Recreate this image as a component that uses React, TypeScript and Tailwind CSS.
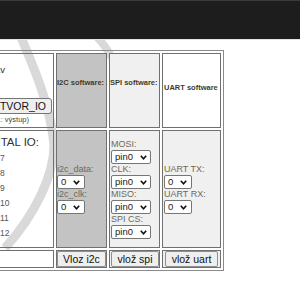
import React from "react";

function Sel({ value, wide }: { value: string; wide?: boolean }) {
  return (
    <div
      className={
        "flex h-[14px] items-center justify-between rounded-[2px] border border-[#767676] bg-white pl-[3px] text-[9.5px] leading-none text-[#1a1a1a] " +
        (wide ? "w-[40px] pr-[3px]" : "w-[28px] pr-[4px]")
      }
    >
      <span>{value}</span>
      <svg width="7" height="5" viewBox="0 0 7 5">
        <path d="M0.8 0.8 L3.5 3.8 L6.2 0.8" stroke="#111" strokeWidth="1.6" fill="none" />
      </svg>
    </div>
  );
}

function Field({ label, value, wide }: { label: string; value: string; wide?: boolean }) {
  return (
    <div className="flex flex-col items-start">
      <div className="h-[11px] whitespace-nowrap text-[9px] leading-[11px] text-[#6d6a58]">{label}</div>
      <Sel value={value} wide={wide} />
    </div>
  );
}

const cell = "border border-[#707070]";

export default function App() {
  return (
    <div className="relative h-[300px] w-[300px] overflow-hidden bg-white font-['Liberation_Sans',Arial,sans-serif]">
      <svg className="pointer-events-none absolute left-0 top-0" width="300" height="300">
        <path d="M18 30 C28 55 50 100 54 145 C54 175 35 215 5 248" stroke="#d9d9d9" strokeWidth="9" fill="none" />
        <path d="M96 36 Q105 45 112 58" stroke="#d9d9d9" strokeWidth="8" fill="none" />
      </svg>

      <div className="relative h-[40px] border-b border-t border-b-[#e4e4e4] border-t-[#3a3a3a] bg-[#1d1d1d]" />

      <div className="relative pt-[10px]">
        <div className="ml-[-109px] grid w-[333px] grid-cols-[160px_51px_51px_59px] grid-rows-[75px_118px_18px] gap-[2px] border border-[#8a8a8a] p-[2px]">
          {/* row 1 */}
          <div className={cell + " flex flex-col items-end"}>
            <div className="mr-[48px] mt-[10px] whitespace-nowrap text-[9.5px] leading-[11px] text-[#333]">Nastav</div>
            <button className="mr-[1px] mt-[23px] h-[16px] whitespace-nowrap rounded-[3px] border border-[#767676] bg-[#efefef] px-[5px] text-[10.5px] leading-none text-[#111]">
              VYTVOR_IO
            </button>
            <div className="mr-[24px] mt-[1px] whitespace-nowrap text-[7.5px] leading-[9px] text-[#444]">(0: vstup, 1: výstup)</div>
          </div>
          <div className={cell + " bg-[#c3c3c3] pt-[24px]"}>
            <div className="whitespace-nowrap text-[7.5px] font-bold leading-[9px] text-[#3e3d2a]">I2C software:</div>
          </div>
          <div className={cell + " bg-[#f0f0f0] pt-[24px]"}>
            <div className="whitespace-nowrap text-[7.5px] font-bold leading-[9px] text-[#3e3d2a]">SPI software:</div>
          </div>
          <div className={cell + " bg-white pl-[1px] pt-[29px]"}>
            <div className="whitespace-nowrap text-[7.5px] font-bold leading-[9px] text-[#3e3d2a]">UART software</div>
          </div>

          {/* row 2 */}
          <div className={cell + " flex flex-col"}>
            <div className="mr-[14px] mt-[5px] self-end whitespace-nowrap text-[11.5px] leading-[13px] text-[#333]">DIGITAL IO:</div>
            <div className="mt-[2px] flex flex-col pl-[105px]">
              {["7", "8", "9", "10", "11", "12"].map((n) => (
                <div key={n} className="h-[15px] text-[8.5px] leading-[15px] text-[#555]">
                  {n}
                </div>
              ))}
            </div>
          </div>
          <div className={cell + " flex flex-col justify-center bg-[#c3c3c3]"}>
            <Field label="i2c_data:" value="0" />
            <Field label="i2c_clk:" value="0" />
          </div>
          <div className={cell + " flex flex-col justify-center bg-[#f0f0f0] pl-[1px]"}>
            <Field label="MOSI:" value="pin0" wide />
            <Field label="CLK:" value="pin0" wide />
            <Field label="MISO:" value="pin0" wide />
            <Field label="SPI CS:" value="pin0" wide />
          </div>
          <div className={cell + " flex flex-col justify-center bg-[#f0f0f0] pl-[1px]"}>
            <Field label="UART TX:" value="0" />
            <Field label="UART RX:" value="0" />
          </div>

          {/* row 3 */}
          <div className={cell} />
          <div className={cell + " flex bg-[#c3c3c3]"}>
            <button className="h-full w-full rounded-[2px] border border-[#8f8f8f] bg-[#efefef] text-[10.5px] leading-none text-[#111]">
              Vloz i2c
            </button>
          </div>
          <div className={cell + " flex bg-[#f0f0f0] pl-[1px]"}>
            <button className="h-full w-full rounded-[2px] border border-[#8f8f8f] bg-[#efefef] text-[10.5px] leading-none text-[#111]">
              vlož spi
            </button>
          </div>
          <div className={cell + " flex bg-[#f0f0f0] px-[2px]"}>
            <button className="h-full w-full rounded-[2px] border border-[#8f8f8f] bg-[#efefef] text-[10.5px] leading-none text-[#111]">
              vlož uart
            </button>
          </div>
        </div>
      </div>
    </div>
  );
}
